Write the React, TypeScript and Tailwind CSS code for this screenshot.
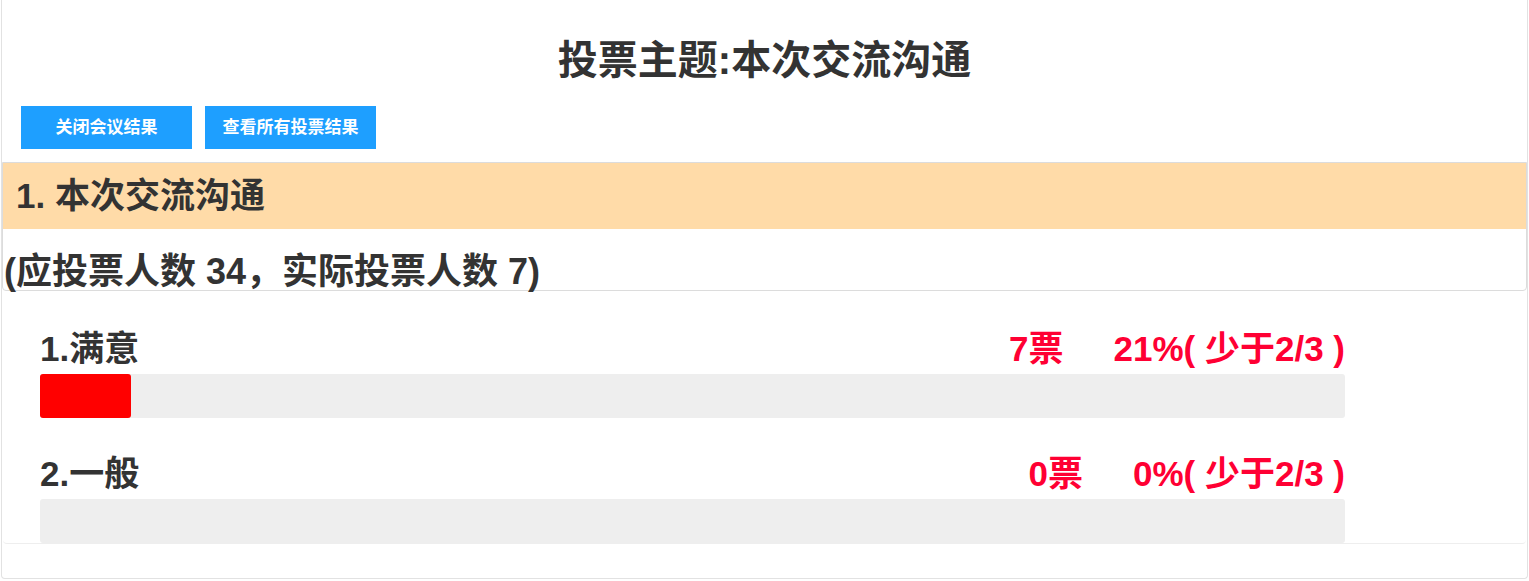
const options = [
  { label: '1.满意', votes: 7, percent: 21 },
  { label: '2.一般', votes: 0, percent: 0 },
];

const font = 'font-["Liberation_Sans","Noto_Sans_CJK_SC",sans-serif]';

export default function App() {
  return (
    <div className={`${font} font-bold text-[#333] bg-white`}>
      <div className="mx-px h-[579px] border border-t-0 border-[#e2e2e2] rounded-b-[4px]">
        <h1 className="pt-[32px] text-center text-[40px] leading-[56px]">投票主题:本次交流沟通</h1>

        <div className="mt-[18px] flex gap-[13px] pl-[19px]">
          <button className="h-[43px] w-[171px] bg-[#1e9fff] text-[17px] text-white">关闭会议结果</button>
          <button className="h-[43px] w-[171px] bg-[#1e9fff] text-[17px] text-white">查看所有投票结果</button>
        </div>

        <div className="mt-[13px] border border-[#dcdcdc] rounded-b-[4px]">
          <div className="h-[66px] bg-[#ffdba8] pl-[13px] text-[35px] leading-[66px]">1. 本次交流沟通</div>
          <div className="pl-px pt-[24px] text-[36px] leading-[37px]">(应投票人数 34，实际投票人数 7)</div>
        </div>

        <div className="pt-[38px] pl-[37px] border-b border-[#eeeeee] rounded-b-[4px] mx-px">
          {options.map((opt, i) => (
            <div key={opt.label} className={`w-[1305px] ${i > 0 ? 'mt-[36px]' : ''}`}>
              <div className="flex justify-between text-[35px] leading-[40px]">
                <span>{opt.label}</span>
                <span className="text-[#ff0033]">
                  {opt.votes}票<span className="ml-[50px]">{opt.percent}%( 少于2/3 )</span>
                </span>
              </div>
              <div className="mt-[5px] h-[44px] rounded-[3px] bg-[#eeeeee]">
                <div className="h-full rounded-[3px] bg-[#ff0000]" style={{ width: `${opt.percent === 0 ? 0 : 91}px` }} />
              </div>
            </div>
          ))}
        </div>
      </div>
    </div>
  );
}
